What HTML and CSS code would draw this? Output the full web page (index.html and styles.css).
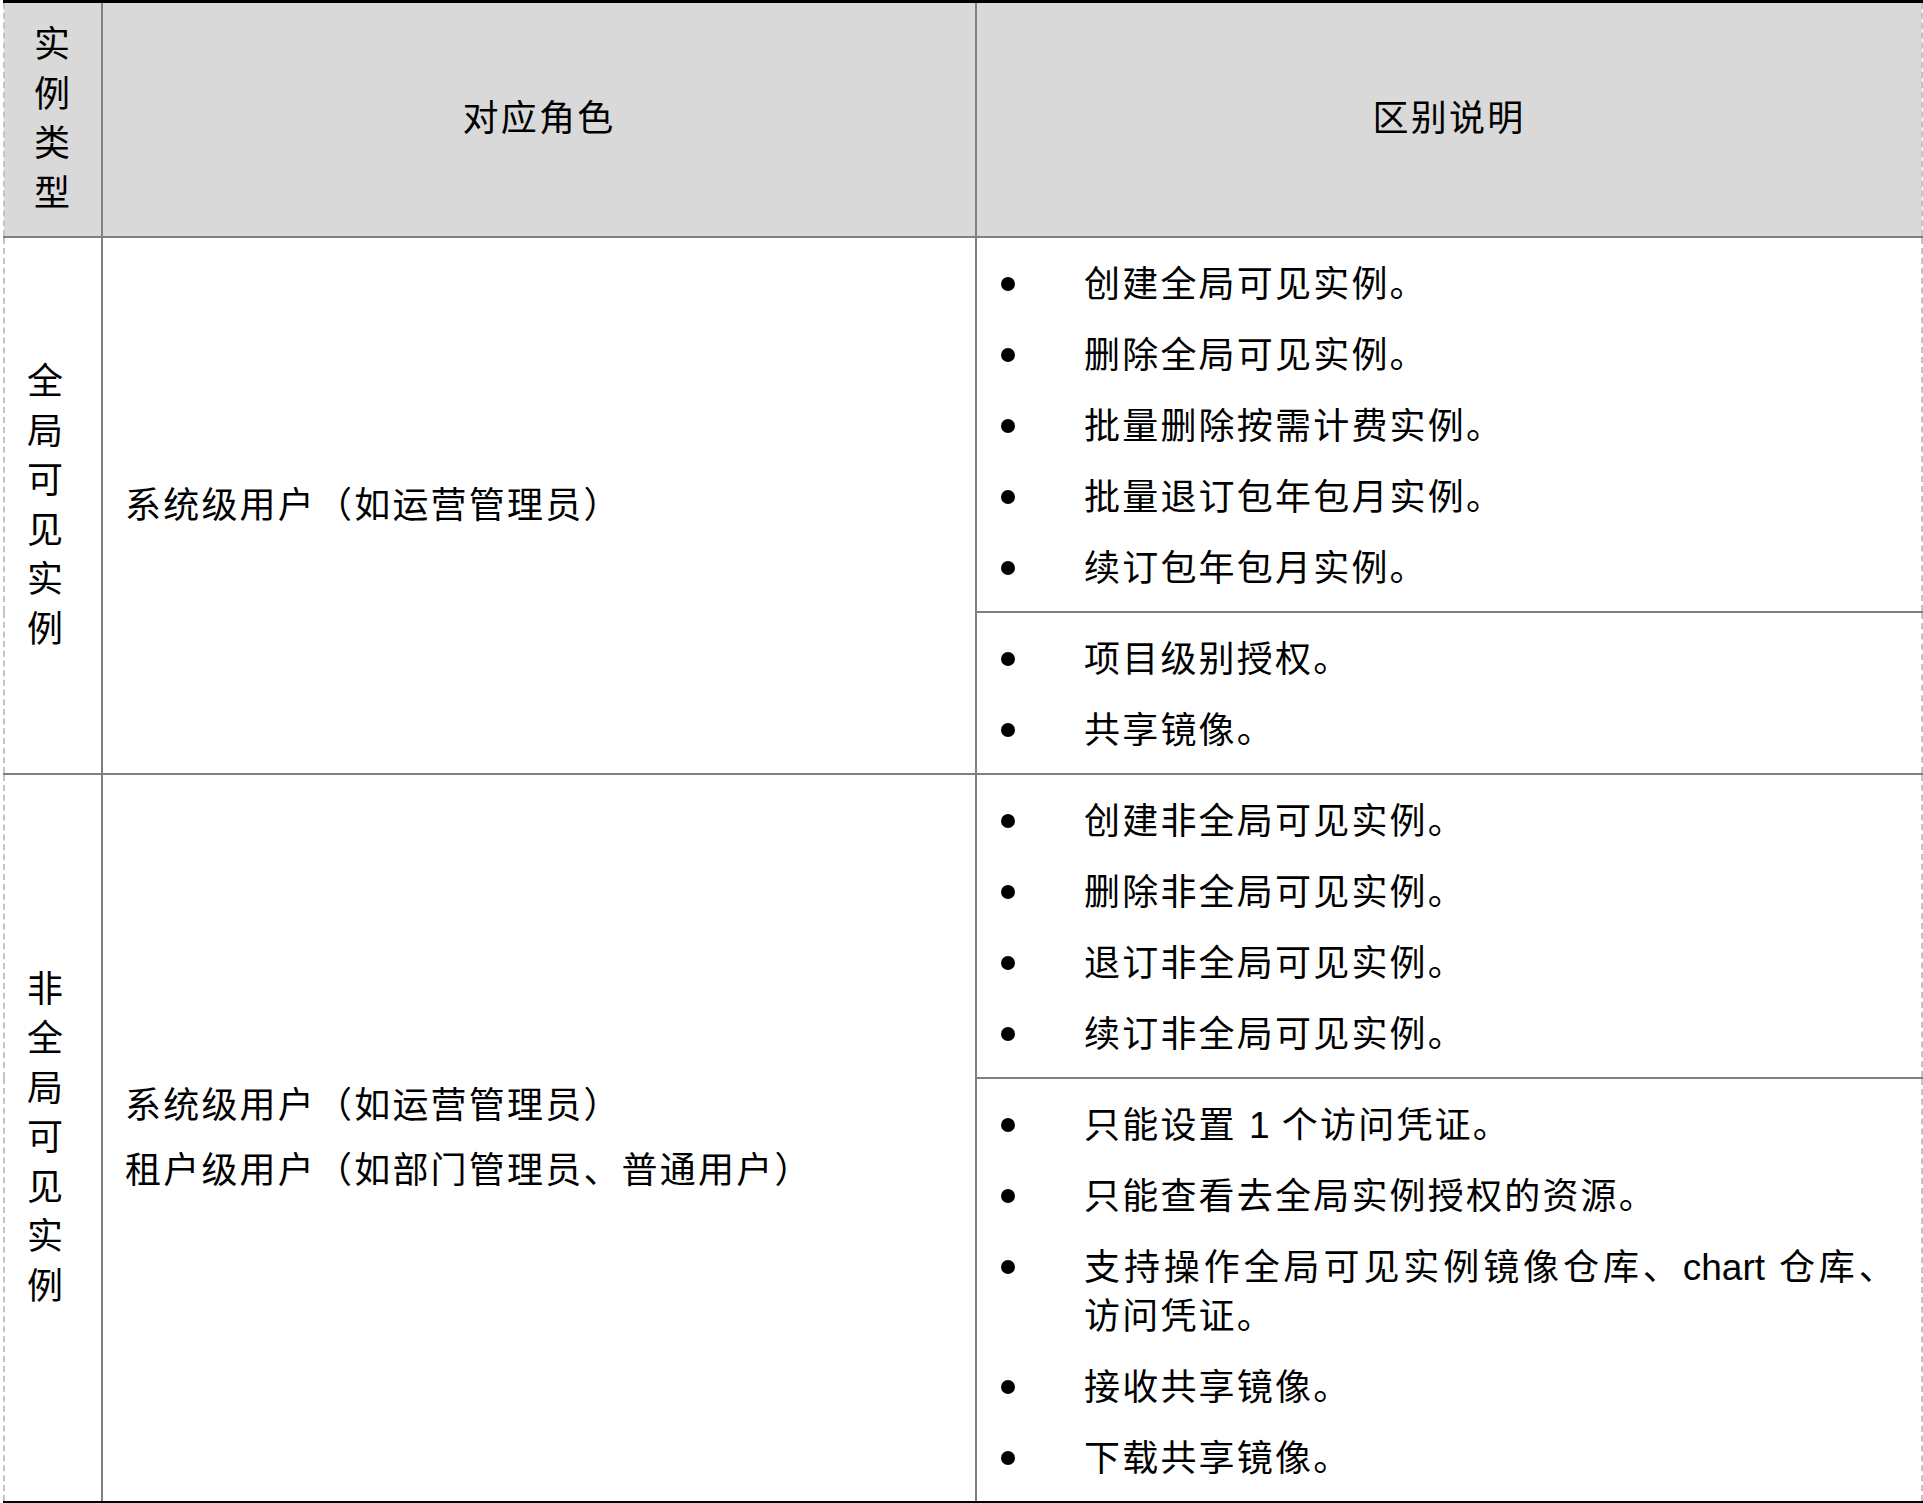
FILE: index.html
```html
<!DOCTYPE html>
<html lang="zh-CN">
<head>
<meta charset="utf-8">
<title>实例类型</title>
<link rel="stylesheet" href="styles.css">
</head>
<body>
<table class="grid">
  <colgroup>
    <col class="c-type">
    <col class="c-role">
    <col class="c-desc">
  </colgroup>
  <thead>
    <tr>
      <th class="type">实例类型</th>
      <th class="head">对应角色</th>
      <th class="head">区别说明</th>
    </tr>
  </thead>
  <tbody>
    <tr>
      <td class="type" rowspan="2">全局可见实例</td>
      <td class="role" rowspan="2"><p>系统级用户（如运营管理员）</p></td>
      <td class="desc">
        <ul>
          <li><span class="t">创建全局可见实例。</span></li>
          <li><span class="t">删除全局可见实例。</span></li>
          <li><span class="t">批量删除按需计费实例。</span></li>
          <li><span class="t">批量退订包年包月实例。</span></li>
          <li><span class="t">续订包年包月实例。</span></li>
        </ul>
      </td>
    </tr>
    <tr>
      <td class="desc">
        <ul>
          <li><span class="t">项目级别授权。</span></li>
          <li><span class="t">共享镜像。</span></li>
        </ul>
      </td>
    </tr>
    <tr>
      <td class="type" rowspan="2">非全局可见实例</td>
      <td class="role" rowspan="2"><p>系统级用户（如运营管理员）</p><p>租户级用户（如部门管理员、普通用户）</p></td>
      <td class="desc">
        <ul>
          <li><span class="t">创建非全局可见实例。</span></li>
          <li><span class="t">删除非全局可见实例。</span></li>
          <li><span class="t">退订非全局可见实例。</span></li>
          <li><span class="t">续订非全局可见实例。</span></li>
        </ul>
      </td>
    </tr>
    <tr>
      <td class="desc">
        <ul>
          <li><span class="t">只能设置 <span class="lat">1</span> 个访问凭证。</span></li>
          <li><span class="t">只能查看去全局实例授权的资源。</span></li>
          <li><span class="t">支持操作全局可见实例镜像仓库、<span class="lat">chart</span> 仓库、访问凭证。</span></li>
          <li><span class="t">接收共享镜像。</span></li>
          <li><span class="t">下载共享镜像。</span></li>
        </ul>
      </td>
    </tr>
  </tbody>
</table>
</body>
</html>
```
FILE: styles.css
```css
html, body {
  margin: 0;
  padding: 0;
  background: #ffffff;
}

body {
  font-family: "Liberation Sans", "Noto Sans CJK SC", sans-serif;
  font-size: 36px;
  letter-spacing: 2.2px;
  color: #000000;
}

.grid {
  border-collapse: collapse;
  table-layout: fixed;
  width: 1918px;
  margin-left: 3px;
  border-top: 3px solid #000000;
  border-bottom: 3px solid #000000;
  border-left: 2px dashed #c4c4c4;
  border-right: 2px dashed #c4c4c4;
}

.c-type { width: 98px; }
.c-role { width: 874px; }
.c-desc { width: 946px; }

.grid th,
.grid td {
  border: 2px solid #808080;
  font-weight: normal;
  vertical-align: middle;
  line-height: 49.5px;
}

.grid th:first-child,
.grid td.type {
  border-left: 2px dashed #c4c4c4;
}

.grid th:last-child,
.grid td.desc {
  border-right: 2px dashed #c4c4c4;
}

.grid thead th {
  background: #d9d9d9;
  border-top: 3px solid #000000;
  padding: 17px 0 18px;
  text-align: center;
}

.grid th.type {
  padding-left: 22px;
  padding-right: 22px;
}

.grid td.type {
  padding: 0 22px;
  text-align: left;
}

.grid td.role {
  padding: 0 20px 0 22px;
}

.role p {
  margin: 0;
  line-height: 49px;
}

.role p + p {
  margin-top: 16px;
}

.grid td.desc {
  padding: 0 24px 18px 0;
  vertical-align: top;
}

.desc ul {
  list-style: none;
  margin: 0;
  padding: 0;
}

.desc li {
  display: flex;
  align-items: flex-start;
  margin-top: 22px;
  line-height: 49px;
}

.desc li::before {
  content: "";
  flex: none;
  width: 14px;
  height: 14px;
  margin: 17px 69px 0 24px;
  border-radius: 50%;
  background: #000000;
}

.desc .t {
  flex: 1;
  min-width: 0;
  text-align: justify;
}

.lat {
  letter-spacing: 0;
  font-size: 37px;
}

tbody tr:last-child td,
tbody td.type:last-of-type {
  border-bottom: 3px solid #000000;
}
```
